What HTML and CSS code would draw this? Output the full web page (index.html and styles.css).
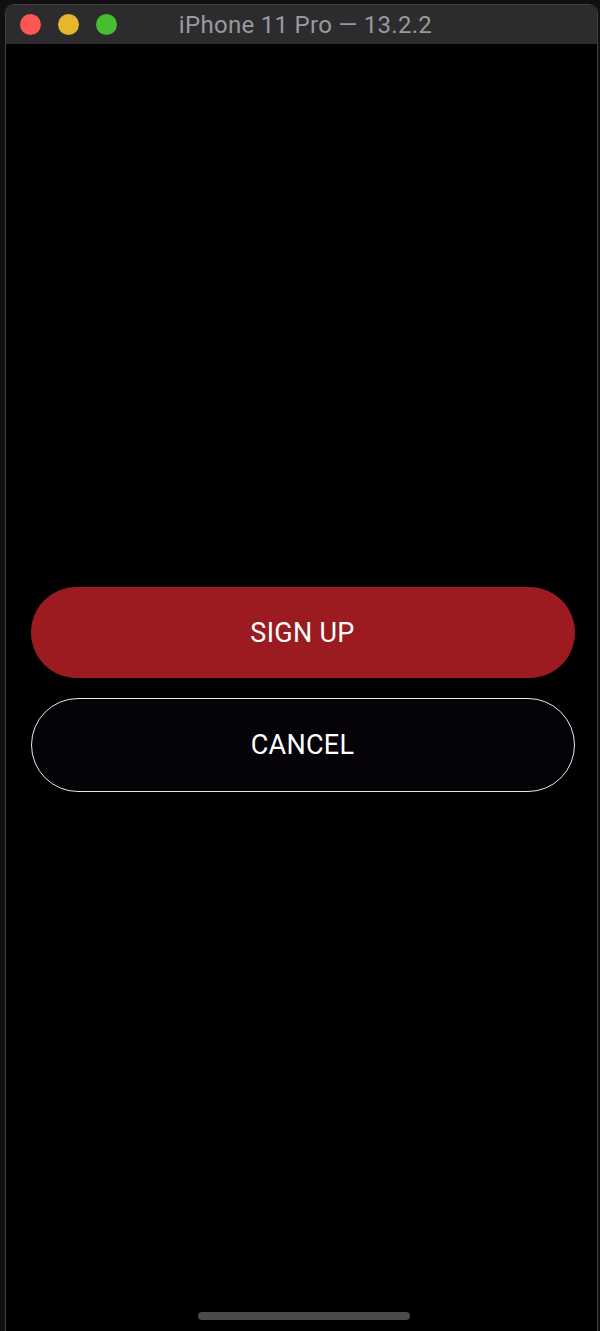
FILE: index.html
```html
<!DOCTYPE html>
<html>
<head>
<meta charset="utf-8">
<link rel="stylesheet" href="styles.css">
</head>
<body>
<div class="window">
  <div class="titlebar">
    <div class="lights">
      <span class="light red"></span>
      <span class="light yellow"></span>
      <span class="light green"></span>
    </div>
    <div class="title">iPhone 11 Pro — 13.2.2</div>
  </div>
  <div class="screen">
    <div class="actions">
      <button class="btn primary">SIGN UP</button>
      <button class="btn outline">CANCEL</button>
    </div>
    <div class="home"></div>
  </div>
</div>
</body>
</html>
```
FILE: styles.css
```css
html, body {
  margin: 0;
  padding: 0;
  height: 100%;
  background: #101012;
}
body {
  font-family: "Inter", "Roboto", sans-serif;
  overflow: hidden;
}
.window {
  margin: 4px 2px 0 5px;
  height: calc(100% - 4px);
  box-sizing: border-box;
  border: 1px solid #404043;
  border-bottom: none;
  border-radius: 9px 9px 0 0;
  display: flex;
  flex-direction: column;
  overflow: hidden;
}
.titlebar {
  height: 39px;
  flex: none;
  background: #2c2b2e;
  position: relative;
  display: flex;
  align-items: center;
}
.lights {
  display: flex;
  gap: 17px;
  padding-left: 14px;
}
.light {
  width: 21px;
  height: 21px;
  border-radius: 50%;
  display: block;
}
.red { background: #fc5753; }
.yellow { background: #e5b72c; }
.green { background: #45bf2f; }
.title {
  position: absolute;
  left: 0;
  right: 0;
  top: 0;
  bottom: 0;
  display: flex;
  align-items: center;
  justify-content: center;
  color: #9a999c;
  font-family: "Roboto", sans-serif;
  font-size: 24px;
  letter-spacing: 0.3px;
  padding-left: 8px;
}
.screen {
  flex: 1;
  background: #000;
  display: flex;
  flex-direction: column;
  align-items: center;
}
.actions {
  margin-top: 543px;
  width: 544px;
  display: flex;
  flex-direction: column;
  gap: 20px;
  margin-left: 2px;
}
.btn {
  width: 100%;
  border-radius: 48px;
  color: #fff;
  font-family: "Roboto", sans-serif;
  font-size: 27px;
  font-weight: 400;
  letter-spacing: 0.3px;
  display: flex;
  align-items: center;
  justify-content: center;
  padding: 0;
  margin: 0;
}
.primary {
  height: 91px;
  background: #9b1b20;
  border: none;
}
.outline {
  height: 94px;
  background: #050307;
  border: 1.5px solid #e8e8e8;
}
.home {
  margin-top: auto;
  margin-bottom: 11px;
  width: 212px;
  height: 8px;
  border-radius: 4px;
  background: #4a494c;
  margin-left: 4px;
}
```
